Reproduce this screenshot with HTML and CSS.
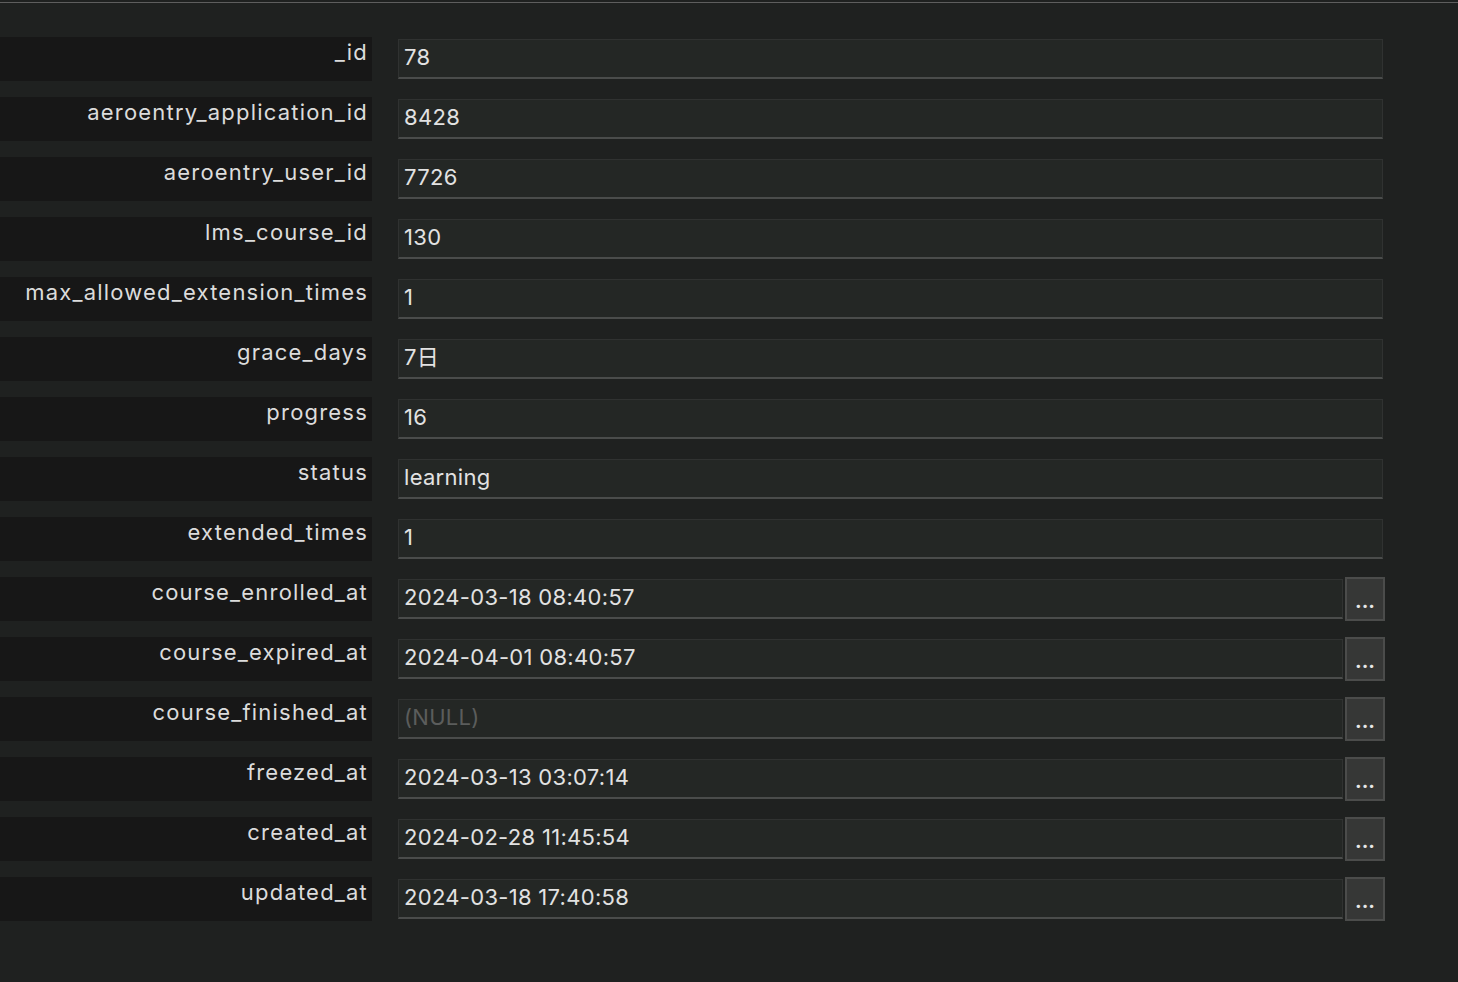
FILE: index.html
```html
<!DOCTYPE html>
<html>
<head>
<meta charset="utf-8">
<link rel="stylesheet" href="styles.css">
</head>
<body>
<div class="topbar"></div>
<div class="form">
  <div class="row"><div class="label">_id</div><div class="field"><div class="input">78</div></div></div>
  <div class="row"><div class="label">aeroentry_application_id</div><div class="field"><div class="input">8428</div></div></div>
  <div class="row"><div class="label">aeroentry_user_id</div><div class="field"><div class="input">7726</div></div></div>
  <div class="row"><div class="label">lms_course_id</div><div class="field"><div class="input">130</div></div></div>
  <div class="row"><div class="label">max_allowed_extension_times</div><div class="field"><div class="input">1</div></div></div>
  <div class="row"><div class="label">grace_days</div><div class="field"><div class="input">7日</div></div></div>
  <div class="row"><div class="label">progress</div><div class="field"><div class="input">16</div></div></div>
  <div class="row"><div class="label">status</div><div class="field"><div class="input">learning</div></div></div>
  <div class="row"><div class="label">extended_times</div><div class="field"><div class="input">1</div></div></div>
  <div class="row"><div class="label">course_enrolled_at</div><div class="field"><div class="input short">2024-03-18 08:40:57</div><div class="btn">...</div></div></div>
  <div class="row"><div class="label">course_expired_at</div><div class="field"><div class="input short">2024-04-01 08:40:57</div><div class="btn">...</div></div></div>
  <div class="row"><div class="label">course_finished_at</div><div class="field"><div class="input short null">(NULL)</div><div class="btn">...</div></div></div>
  <div class="row"><div class="label">freezed_at</div><div class="field"><div class="input short">2024-03-13 03:07:14</div><div class="btn">...</div></div></div>
  <div class="row"><div class="label">created_at</div><div class="field"><div class="input short">2024-02-28 11:45:54</div><div class="btn">...</div></div></div>
  <div class="row"><div class="label">updated_at</div><div class="field"><div class="input short">2024-03-18 17:40:58</div><div class="btn">...</div></div></div>
</div>
</body>
</html>
```
FILE: styles.css
```css
html, body {
  margin: 0;
  padding: 0;
  background: #1f2120;
  height: 100%;
  overflow: hidden;
}
body {
  font-family: Inter, "Noto Sans CJK JP", sans-serif;
  font-size: 22px;
  color: #dedede;
}
.topbar {
  height: 2px;
  border-bottom: 1px solid #5e5e5e;
  background: #1f2120;
}
.form {
  padding-top: 34px;
  display: flex;
  flex-direction: column;
  gap: 16px;
  width: 1385px;
}
.row {
  display: grid;
  grid-template-columns: 372px 1fr;
  column-gap: 26px;
  height: 44px;
}
.label {
  background: #171717;
  text-align: right;
  padding-right: 4px;
  line-height: 22px;
  padding-top: 4px;
  color: #dcdcdc;
  white-space: nowrap;
  letter-spacing: 1.2px;
}
.field {
  display: flex;
  gap: 2px;
  align-items: flex-start;
}
.input {
  flex: 1;
  margin-top: 2px;
  height: 40px;
  box-sizing: border-box;
  background: #242725;
  border: 1px solid #303231;
  border-bottom: 2px solid #4a4c4b;
  padding: 5px 0 0 5px;
  line-height: 24px;
  color: #e2e2e2;
  margin-right: 2px;
  letter-spacing: 0.3px;
}
.input.short {
  margin-right: 0;
}
.input.null {
  color: #5b5d5c;
}
.btn {
  width: 40px;
  height: 44px;
  box-sizing: border-box;
  background: #363736;
  border: 2px solid #4b4c4b;
  color: #e6e6e6;
  font-size: 20px;
  font-weight: 700;
  text-align: center;
  line-height: 44px;
  letter-spacing: 0px;
}
```
